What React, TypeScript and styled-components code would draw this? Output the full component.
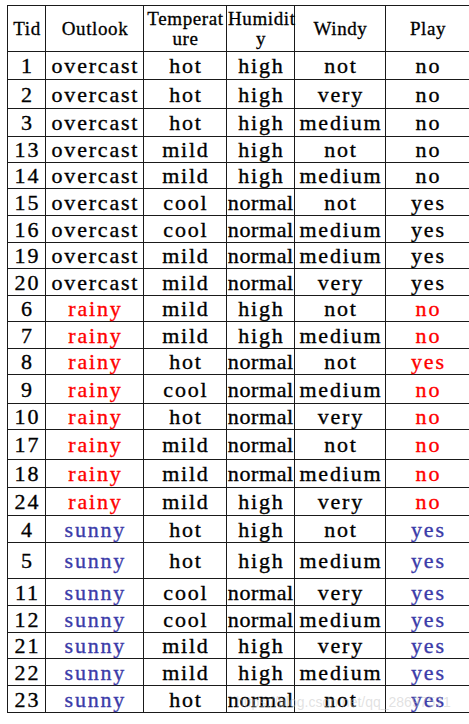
import React from 'react';
import styled, { createGlobalStyle } from 'styled-components';

const GlobalStyle = createGlobalStyle`
  html, body {
    margin: 0;
    padding: 0;
    background: #ffffff;
  }
`;

type Tone = 'plain' | 'red' | 'blue';

const toneColor: Record<Tone, string> = {
  plain: '#000000',
  red: '#ff0000',
  blue: '#3b3ba9',
};

const Page = styled.div`
  position: relative;
  padding: 5px 0 0 7px;
  font-family: 'Liberation Serif', 'Times New Roman', serif;
`;

const Table = styled.table`
  border-collapse: collapse;
  table-layout: fixed;
  width: 462px;
`;

const HeadCell = styled.th`
  border: 1px solid #1a1a1a;
  padding: 0 0 0 1px;
  font-size: 19px;
  font-weight: normal;
  letter-spacing: 0.6px;
  line-height: 20px;
  color: #000;
  text-align: center;
  vertical-align: middle;
  white-space: nowrap;
  -webkit-text-stroke: 0.3px #000;
`;

const Row = styled.tr<{ $h: number }>`
  height: ${p => p.$h}px;
`;

const Cell = styled.td<{ $tone?: Tone; $tight?: boolean }>`
  border: 1px solid #1a1a1a;
  padding: 1px 0 0 ${p => (p.$tight ? 0.6 : 1.8)}px;
  font-size: 22px;
  font-weight: normal;
  letter-spacing: ${p => (p.$tight ? 0.6 : 1.8)}px;
  line-height: 22px;
  color: ${p => toneColor[p.$tone || 'plain']};
  -webkit-text-stroke: 0.35px ${p => toneColor[p.$tone || 'plain']};
  text-align: center;
  vertical-align: middle;
  white-space: nowrap;
`;

const Watermark = styled.div`
  position: absolute;
  left: 236px;
  top: 694px;
  font-family: 'Liberation Sans', Arial, sans-serif;
  font-size: 14px;
  color: rgba(190, 190, 190, 0.45);
  pointer-events: none;
  white-space: nowrap;
`;

interface RowData {
  tid: number;
  outlook: string;
  temp: string;
  humidity: string;
  windy: string;
  play: string;
  h: number;
}

const rows: RowData[] = [
  { tid: 1, outlook: 'overcast', temp: 'hot', humidity: 'high', windy: 'not', play: 'no', h: 28 },
  { tid: 2, outlook: 'overcast', temp: 'hot', humidity: 'high', windy: 'very', play: 'no', h: 29 },
  { tid: 3, outlook: 'overcast', temp: 'hot', humidity: 'high', windy: 'medium', play: 'no', h: 28 },
  { tid: 13, outlook: 'overcast', temp: 'mild', humidity: 'high', windy: 'not', play: 'no', h: 26 },
  { tid: 14, outlook: 'overcast', temp: 'mild', humidity: 'high', windy: 'medium', play: 'no', h: 26 },
  { tid: 15, outlook: 'overcast', temp: 'cool', humidity: 'normal', windy: 'not', play: 'yes', h: 27 },
  { tid: 16, outlook: 'overcast', temp: 'cool', humidity: 'normal', windy: 'medium', play: 'yes', h: 27 },
  { tid: 19, outlook: 'overcast', temp: 'mild', humidity: 'normal', windy: 'medium', play: 'yes', h: 26 },
  { tid: 20, outlook: 'overcast', temp: 'mild', humidity: 'normal', windy: 'very', play: 'yes', h: 27 },
  { tid: 6, outlook: 'rainy', temp: 'mild', humidity: 'high', windy: 'not', play: 'no', h: 26 },
  { tid: 7, outlook: 'rainy', temp: 'mild', humidity: 'high', windy: 'medium', play: 'no', h: 27 },
  { tid: 8, outlook: 'rainy', temp: 'hot', humidity: 'normal', windy: 'not', play: 'yes', h: 26 },
  { tid: 9, outlook: 'rainy', temp: 'cool', humidity: 'normal', windy: 'medium', play: 'no', h: 29 },
  { tid: 10, outlook: 'rainy', temp: 'hot', humidity: 'normal', windy: 'very', play: 'no', h: 26 },
  { tid: 17, outlook: 'rainy', temp: 'mild', humidity: 'normal', windy: 'not', play: 'no', h: 30 },
  { tid: 18, outlook: 'rainy', temp: 'mild', humidity: 'normal', windy: 'medium', play: 'no', h: 28 },
  { tid: 24, outlook: 'rainy', temp: 'mild', humidity: 'high', windy: 'very', play: 'no', h: 28 },
  { tid: 4, outlook: 'sunny', temp: 'hot', humidity: 'high', windy: 'not', play: 'yes', h: 27 },
  { tid: 5, outlook: 'sunny', temp: 'hot', humidity: 'high', windy: 'medium', play: 'yes', h: 36 },
  { tid: 11, outlook: 'sunny', temp: 'cool', humidity: 'normal', windy: 'very', play: 'yes', h: 27 },
  { tid: 12, outlook: 'sunny', temp: 'cool', humidity: 'normal', windy: 'medium', play: 'yes', h: 27 },
  { tid: 21, outlook: 'sunny', temp: 'mild', humidity: 'high', windy: 'very', play: 'yes', h: 26 },
  { tid: 22, outlook: 'sunny', temp: 'mild', humidity: 'high', windy: 'medium', play: 'yes', h: 27 },
  { tid: 23, outlook: 'sunny', temp: 'hot', humidity: 'normal', windy: 'not', play: 'yes', h: 27 },
];

const toneFor = (outlook: string): Tone =>
  outlook === 'rainy' ? 'red' : outlook === 'sunny' ? 'blue' : 'plain';

export default function App() {
  return (
    <>
      <GlobalStyle />
      <Page>
        <Table>
          <colgroup>
            <col style={{ width: 38 }} />
            <col style={{ width: 98 }} />
            <col style={{ width: 83 }} />
            <col style={{ width: 68 }} />
            <col style={{ width: 91 }} />
            <col style={{ width: 84 }} />
          </colgroup>
          <thead>
            <Row $h={46}>
              <HeadCell>Tid</HeadCell>
              <HeadCell>Outlook</HeadCell>
              <HeadCell>Temperat<br />ure</HeadCell>
              <HeadCell>Humidit<br />y</HeadCell>
              <HeadCell>Windy</HeadCell>
              <HeadCell>Play</HeadCell>
            </Row>
          </thead>
          <tbody>
            {rows.map(r => {
              const tone = toneFor(r.outlook);
              return (
                <Row key={r.tid} $h={r.h}>
                  <Cell>{r.tid}</Cell>
                  <Cell $tone={tone}>{r.outlook}</Cell>
                  <Cell>{r.temp}</Cell>
                  <Cell $tight={r.humidity === 'normal'}>{r.humidity}</Cell>
                  <Cell>{r.windy}</Cell>
                  <Cell $tone={tone}>{r.play}</Cell>
                </Row>
              );
            })}
          </tbody>
        </Table>
        <Watermark>https://blog.csdn.net/qq_28697571</Watermark>
      </Page>
    </>
  );
}
